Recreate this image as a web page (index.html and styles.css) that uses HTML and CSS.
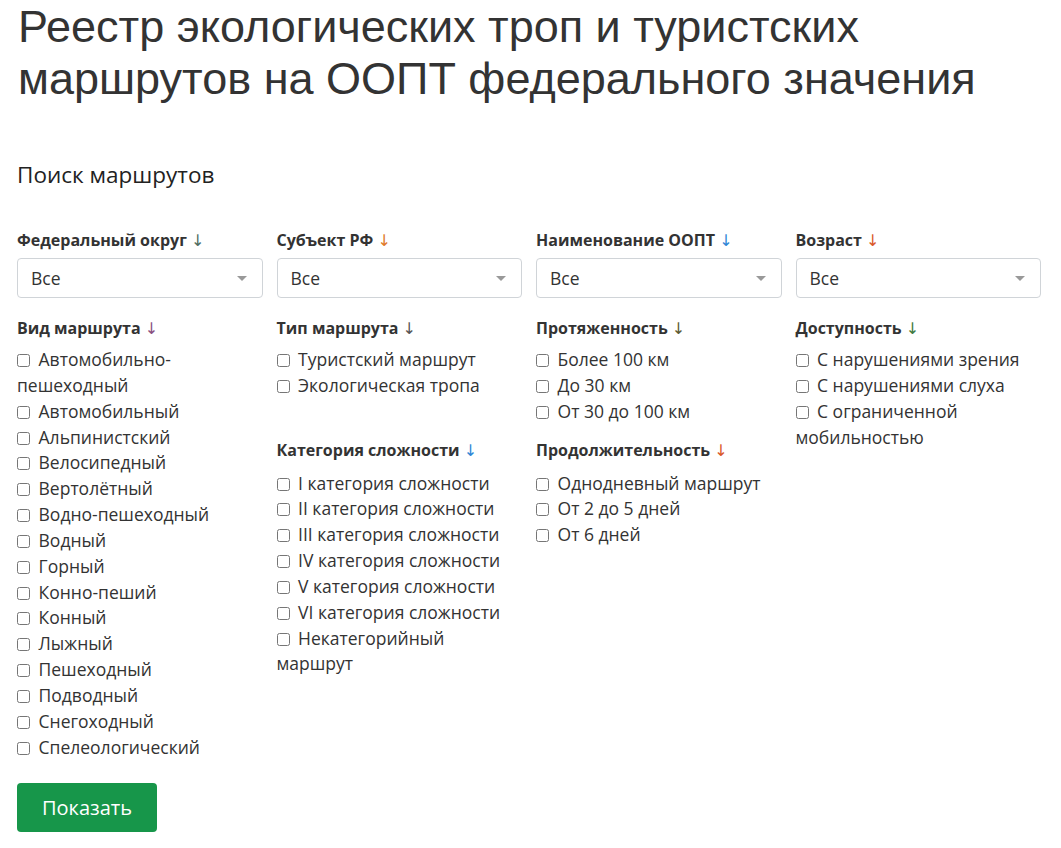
FILE: index.html
```html
<!DOCTYPE html>
<html lang="ru">
<head>
<meta charset="utf-8">
<title>Реестр экологических троп</title>
<link rel="stylesheet" href="styles.css">
</head>
<body>
<div class="page">
  <h1 class="title">Реестр экологических троп и туристских маршрутов на ООПТ федерального значения</h1>
  <h2 class="subtitle">Поиск маршрутов</h2>

  <div class="selects">
    <div class="field">
      <div class="label">Федеральный округ <span class="arr a-teal">↓</span></div>
      <div class="select"><span>Все</span><i class="caret"></i></div>
    </div>
    <div class="field">
      <div class="label">Субъект РФ <span class="arr a-orange">↓</span></div>
      <div class="select"><span>Все</span><i class="caret"></i></div>
    </div>
    <div class="field">
      <div class="label">Наименование ООПТ <span class="arr a-blue">↓</span></div>
      <div class="select"><span>Все</span><i class="caret"></i></div>
    </div>
    <div class="field">
      <div class="label">Возраст <span class="arr a-red">↓</span></div>
      <div class="select"><span>Все</span><i class="caret"></i></div>
    </div>
  </div>

  <div class="groups">
    <div class="group g-vid">
      <div class="label">Вид маршрута <span class="arr a-purple">↓</span></div>
      <label class="check"><input type="checkbox"> Автомобильно-пешеходный</label>
      <label class="check"><input type="checkbox"> Автомобильный</label>
      <label class="check"><input type="checkbox"> Альпинистский</label>
      <label class="check"><input type="checkbox"> Велосипедный</label>
      <label class="check"><input type="checkbox"> Вертолётный</label>
      <label class="check"><input type="checkbox"> Водно-пешеходный</label>
      <label class="check"><input type="checkbox"> Водный</label>
      <label class="check"><input type="checkbox"> Горный</label>
      <label class="check"><input type="checkbox"> Конно-пеший</label>
      <label class="check"><input type="checkbox"> Конный</label>
      <label class="check"><input type="checkbox"> Лыжный</label>
      <label class="check"><input type="checkbox"> Пешеходный</label>
      <label class="check"><input type="checkbox"> Подводный</label>
      <label class="check"><input type="checkbox"> Снегоходный</label>
      <label class="check"><input type="checkbox"> Спелеологический</label>
    </div>
    <div class="group g-tip">
      <div class="label">Тип маршрута <span class="arr a-dark">↓</span></div>
      <label class="check"><input type="checkbox"> Туристский маршрут</label>
      <label class="check"><input type="checkbox"> Экологическая тропа</label>
    </div>
    <div class="group g-len">
      <div class="label">Протяженность <span class="arr a-olive">↓</span></div>
      <label class="check"><input type="checkbox"> Более 100 км</label>
      <label class="check"><input type="checkbox"> До 30 км</label>
      <label class="check"><input type="checkbox"> От 30 до 100 км</label>
    </div>
    <div class="group g-acc">
      <div class="label">Доступность <span class="arr a-green">↓</span></div>
      <label class="check"><input type="checkbox"> С нарушениями зрения</label>
      <label class="check"><input type="checkbox"> С нарушениями слуха</label>
      <label class="check"><input type="checkbox"> С ограниченной мобильностью</label>
    </div>
    <div class="group g-cat">
      <div class="label">Категория сложности <span class="arr a-blue">↓</span></div>
      <label class="check"><input type="checkbox"> I категория сложности</label>
      <label class="check"><input type="checkbox"> II категория сложности</label>
      <label class="check"><input type="checkbox"> III категория сложности</label>
      <label class="check"><input type="checkbox"> IV категория сложности</label>
      <label class="check"><input type="checkbox"> V категория сложности</label>
      <label class="check"><input type="checkbox"> VI категория сложности</label>
      <label class="check"><input type="checkbox"> Некатегорийный маршрут</label>
    </div>
    <div class="group g-dur">
      <div class="label">Продолжительность <span class="arr a-red">↓</span></div>
      <label class="check"><input type="checkbox"> Однодневный маршрут</label>
      <label class="check"><input type="checkbox"> От 2 до 5 дней</label>
      <label class="check"><input type="checkbox"> От 6 дней</label>
    </div>
  </div>

  <button class="btn" type="button">Показать</button>
</div>
</body>
</html>
```

FILE: styles.css
```css
* { box-sizing: border-box; }

html, body {
  margin: 0;
  padding: 0;
  background: #fff;
}

body {
  font-family: "Open Sans", "DejaVu Sans", sans-serif;
  color: #333;
  font-size: 16px;
}

.page {
  padding: 1px 20px 0 17px;
  width: 1061px;
}

.title {
  margin: 0 0 0 1px;
  font-family: "Liberation Sans", Arial, sans-serif;
  font-weight: 400;
  font-size: 45px;
  line-height: 52px;
  color: #333;
}

.subtitle {
  margin: 57px 0 0 0;
  font-weight: 400;
  font-size: 22.5px;
  line-height: 26px;
  color: #222;
}

.selects {
  margin-top: 41px;
  display: grid;
  grid-template-columns: repeat(4, 1fr);
  column-gap: 14px;
}

.label {
  font-weight: 700;
  font-size: 16px;
  line-height: 22px;
  color: #333;
}

.field .label {
  margin-bottom: 6px;
}

.arr {
  font-family: "DejaVu Sans", sans-serif;
  font-weight: 400;
  font-size: 16px;
}

.a-teal { color: #4f6d62; }
.a-orange { color: #e07a2a; }
.a-blue { color: #2f86d6; }
.a-red { color: #d9582a; }
.a-purple { color: #8a4f80; }
.a-dark { color: #555; }
.a-olive { color: #5d5a33; }
.a-green { color: #3f7a3f; }

.select {
  height: 40px;
  border: 1px solid #d0d4d8;
  border-radius: 4px;
  display: flex;
  align-items: center;
  justify-content: space-between;
  padding: 0 15px 0 13px;
  font-size: 17.5px;
  color: #333;
}

.caret {
  width: 0;
  height: 0;
  border-left: 5px solid transparent;
  border-right: 5px solid transparent;
  border-top: 5px solid #999;
}

.groups {
  margin-top: 19px;
  display: grid;
  grid-template-columns: repeat(4, 1fr);
  grid-template-rows: auto 1fr;
  column-gap: 14px;
  align-items: start;
}

.g-vid { grid-column: 1; grid-row: 1 / span 2; }
.g-tip { grid-column: 2; grid-row: 1; }
.g-len { grid-column: 3; grid-row: 1; }
.g-acc { grid-column: 4; grid-row: 1 / span 2; }
.g-cat { grid-column: 2; grid-row: 2; }
.g-dur { grid-column: 3; grid-row: 2; }

.group .label {
  margin-bottom: 7px;
}

.g-cat .label, .g-dur .label {
  margin-bottom: 9px;
}

.g-tip, .g-len {
  margin-bottom: 14px;
}

.check {
  display: block;
  font-size: 17.5px;
  line-height: 25.85px;
  color: #333;
}

.check input {
  margin: 0 4px 0 0;
  width: 13px;
  height: 13px;
  vertical-align: -1px;
}

.btn {
  margin-top: 22px;
  width: 140px;
  height: 49px;
  border: none;
  border-radius: 4px;
  background: #17964a;
  color: #fff;
  font-family: "Open Sans", sans-serif;
  font-size: 20px;
  padding: 0;
}
```
